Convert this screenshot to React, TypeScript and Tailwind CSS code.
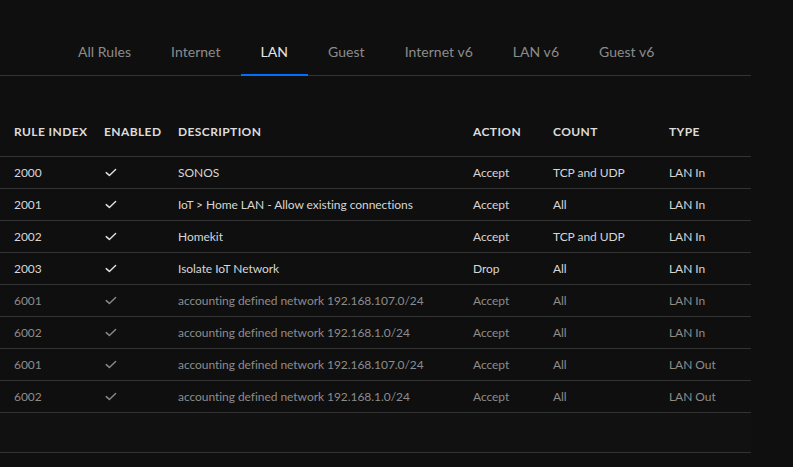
import React from "react";

const tabs = ["All Rules", "Internet", "LAN", "Guest", "Internet v6", "LAN v6", "Guest v6"];

type Row = { idx: string; desc: string; action: string; count: string; type: string; dim?: boolean };

const rows: Row[] = [
  { idx: "2000", desc: "SONOS", action: "Accept", count: "TCP and UDP", type: "LAN In" },
  { idx: "2001", desc: "IoT > Home LAN - Allow existing connections", action: "Accept", count: "All", type: "LAN In" },
  { idx: "2002", desc: "Homekit", action: "Accept", count: "TCP and UDP", type: "LAN In" },
  { idx: "2003", desc: "Isolate IoT Network", action: "Drop", count: "All", type: "LAN In" },
  { idx: "6001", desc: "accounting defined network 192.168.107.0/24", action: "Accept", count: "All", type: "LAN In", dim: true },
  { idx: "6002", desc: "accounting defined network 192.168.1.0/24", action: "Accept", count: "All", type: "LAN In", dim: true },
  { idx: "6001", desc: "accounting defined network 192.168.107.0/24", action: "Accept", count: "All", type: "LAN Out", dim: true },
  { idx: "6002", desc: "accounting defined network 192.168.1.0/24", action: "Accept", count: "All", type: "LAN Out", dim: true },
];

function Check({ dim }: { dim?: boolean }) {
  return (
    <svg width="12" height="9" viewBox="0 0 12 9" fill="none">
      <path d="M1.2 4.6 L4.4 7.4 L10.6 1.4" stroke={dim ? "#8a8a8a" : "#e2e2e2"} strokeWidth="1.4" strokeLinecap="round" strokeLinejoin="round" />
    </svg>
  );
}

export default function App() {
  return (
    <div className="w-[793px] h-[467px] bg-[#0f0f0f] overflow-hidden" style={{ fontFamily: "Lato, 'Open Sans', sans-serif" }}>
      <div className="w-[751px] pt-[28px] border-b border-[#333333]">
        <div className="flex pl-[58px] h-[47px]">
          {tabs.map((t) => {
            const active = t === "LAN";
            return (
              <div
                key={t}
                className={
                  "relative flex items-center px-[20px] text-[14px] tracking-[0.04px] " +
                  (active ? "text-[#e6e6e6]" : "text-[#8c8c8c]")
                }
              >
                {t}
                {active && <div className="absolute left-0 right-0 bottom-[-1px] h-[2px] bg-[#006fff]" />}
              </div>
            );
          })}
        </div>
      </div>
      <div className="w-[751px] mt-[31px]">
        <div className="grid grid-cols-[90px_74px_295px_80px_116px_1fr] pl-[14px] h-[50px] items-center border-b border-[#333333] text-[12px] font-bold tracking-[0.4px] text-[#dcdcdc] uppercase">
          <div>Rule Index</div>
          <div>Enabled</div>
          <div>Description</div>
          <div>Action</div>
          <div>Count</div>
          <div>Type</div>
        </div>
        {rows.map((r, i) => (
          <div
            key={i}
            className={
              "grid grid-cols-[90px_74px_295px_80px_116px_1fr] pl-[14px] h-[32px] items-center border-b border-[#333333] text-[12px] tracking-[-0.05px] " +
              (r.dim ? "text-[#8c8c8c]" : "text-[#d6d6d6]")
            }
          >
            <div>{r.idx}</div>
            <div className="pl-[1px] flex items-center"><Check dim={r.dim} /></div>
            <div>{r.desc}</div>
            <div>{r.action}</div>
            <div>{r.count}</div>
            <div>{r.type}</div>
          </div>
        ))}
        <div className="h-[40px] border-b border-[#333333] bg-[#111111]" />
      </div>
    </div>
  );
}
